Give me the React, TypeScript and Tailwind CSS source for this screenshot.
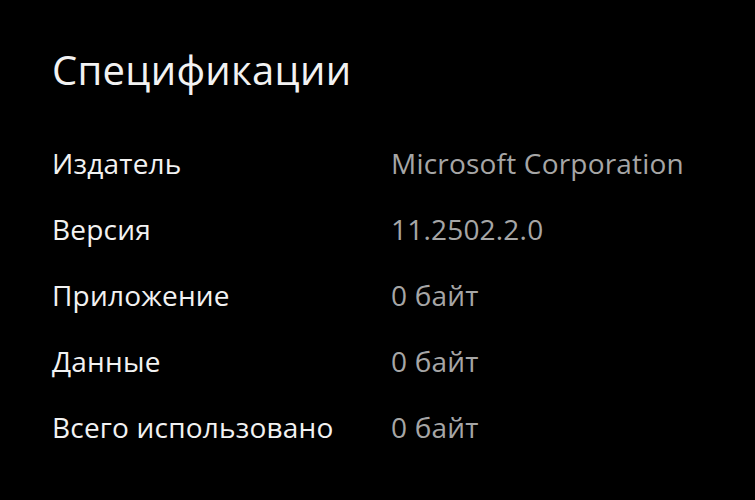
const specs = [
  { label: "Издатель", value: "Microsoft Corporation" },
  { label: "Версия", value: "11.2502.2.0" },
  { label: "Приложение", value: "0 байт" },
  { label: "Данные", value: "0 байт" },
  { label: "Всего использовано", value: "0 байт" },
];

export default function App() {
  return (
    <div className="h-[500px] w-[755px] overflow-hidden bg-black pl-[52px] pt-[44px] font-['Open_Sans','Noto_Sans',sans-serif]">
      <h2 className="text-[40px] leading-[52px] tracking-[0.3px] text-[#f2f2f2]">Спецификации</h2>
      <dl className="mt-[34px] grid grid-cols-[339px_1fr] text-[28px] leading-[66px] tracking-[0.2px]">
        {specs.map((spec) => (
          <div key={spec.label} className="contents">
            <dt className="text-[#f2f2f2]">{spec.label}</dt>
            <dd className="text-[#a6a6a6]">{spec.value}</dd>
          </div>
        ))}
      </dl>
    </div>
  );
}
